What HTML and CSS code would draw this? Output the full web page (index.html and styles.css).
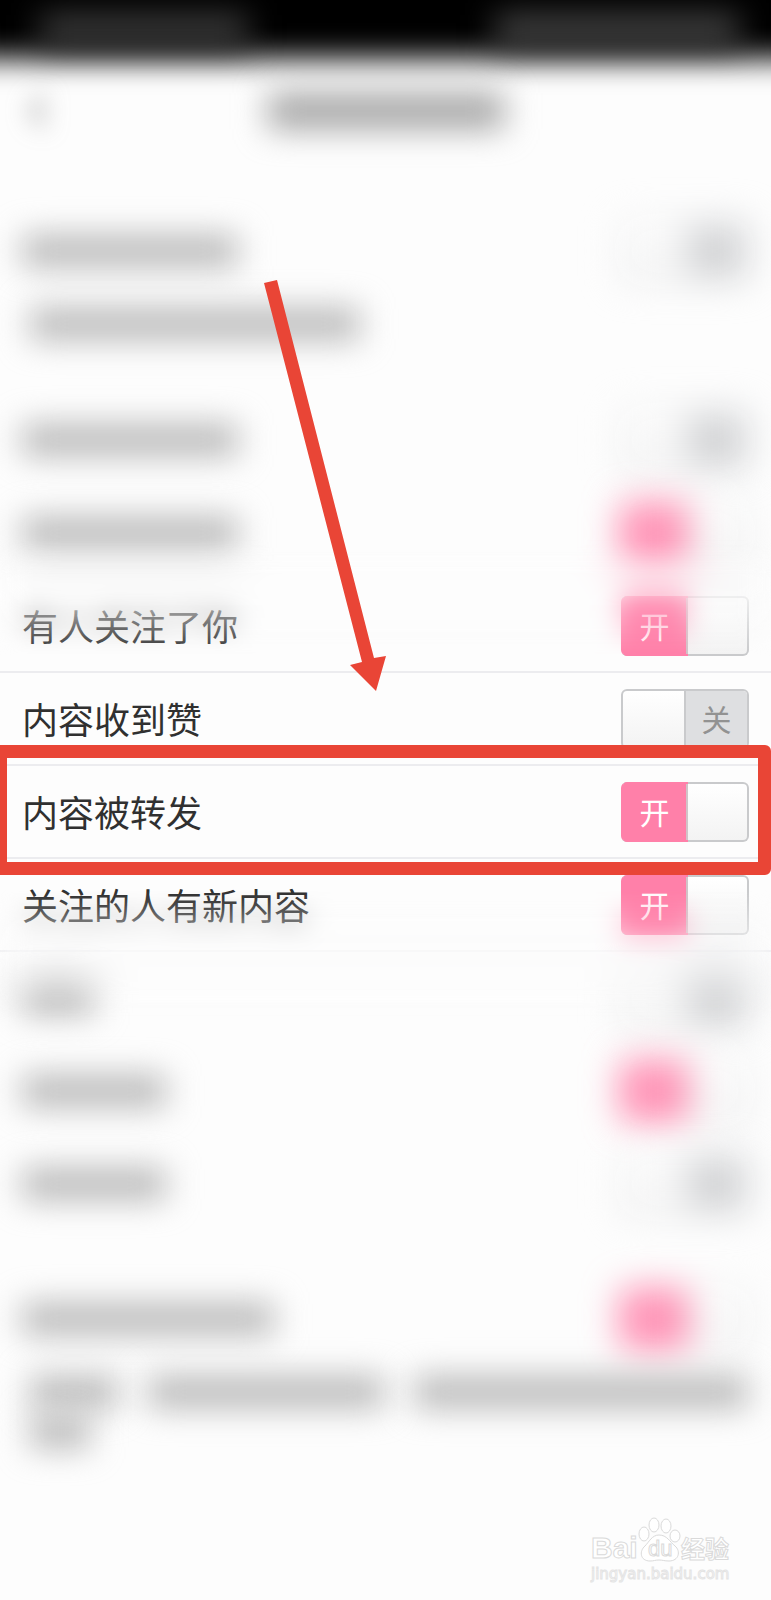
FILE: index.html
```html
<!DOCTYPE html>
<html lang="zh-CN">
<head>
<meta charset="utf-8">
<meta name="viewport" content="width=device-width, initial-scale=1">
<title>有人关注了你</title>
<link rel="stylesheet" href="styles.css">
</head>
<body>
<main class="screen">
  <div class="status"><span class="bar status-left"></span><span class="bar status-right"></span></div>
  <header class="header">
    <svg class="back" viewBox="0 0 20 36" aria-hidden="true"><path d="M17 3 4 18l13 15" fill="none" stroke="#777" stroke-width="4"/></svg>
    <span class="bar title"></span>
  </header>

  <section class="group">
    <div class="row plain"><span class="bar six"></span><label class="switch"><input type="checkbox" aria-label="关"><span class="on">开</span><span class="off">关</span></label></div>
    <div class="note short"><span class="bar desc"></span></div>
  </section>

  <section class="list">
    <div class="row plain"><span class="bar six"></span><label class="switch"><input type="checkbox" aria-label="关"><span class="on">开</span><span class="off">关</span></label></div>
    <div class="row plain"><span class="bar six"></span><label class="switch"><input type="checkbox" aria-label="开" checked><span class="on">开</span><span class="off">关</span></label></div>
    <div class="row"><label class="name" for="follow">有人关注了你</label><label class="switch"><input type="checkbox" id="follow" checked><span class="on">开</span><span class="off">关</span></label></div>
    <div class="row"><label class="name" for="like">内容收到赞</label><label class="switch"><input type="checkbox" id="like"><span class="on">开</span><span class="off">关</span></label></div>
    <div class="row"><label class="name" for="forward">内容被转发</label><label class="switch"><input type="checkbox" id="forward" checked><span class="on">开</span><span class="off">关</span></label></div>
    <div class="row"><label class="name" for="fresh">关注的人有新内容</label><label class="switch"><input type="checkbox" id="fresh" checked><span class="on">开</span><span class="off">关</span></label></div>
    <div class="row plain"><span class="bar two"></span><label class="switch"><input type="checkbox" aria-label="关"><span class="on">开</span><span class="off">关</span></label></div>
    <div class="row plain"><span class="bar four"></span><label class="switch"><input type="checkbox" aria-label="开" checked><span class="on">开</span><span class="off">关</span></label></div>
    <div class="row plain"><span class="bar four"></span><label class="switch"><input type="checkbox" aria-label="关"><span class="on">开</span><span class="off">关</span></label></div>
  </section>

  <section class="group">
    <div class="row plain"><span class="bar seven"></span><label class="switch"><input type="checkbox" aria-label="开" checked><span class="on">开</span><span class="off">关</span></label></div>
    <div class="note">
      <span class="bar part-a"></span><span class="bar part-b"></span><span class="bar part-c"></span><span class="bar part-d"></span>
    </div>
  </section>

  <div class="haze haze-top"></div>
  <div class="haze haze-bottom"></div>
  <div class="frame"></div>
  <svg class="arrow" viewBox="0 0 124 412" aria-hidden="true"><path d="M1 3 14 0 111 378l12-2-10 35-26-26 12-3z" fill="#e94536"/></svg>

  <svg class="mark" viewBox="0 0 144 72" role="img" aria-label="Baidu">
    <g class="outline">
      <text x="4" y="42" class="mark-big">Bai</text>
      <ellipse cx="57" cy="18" rx="5" ry="7"/>
      <ellipse cx="67" cy="9" rx="5" ry="7"/>
      <ellipse cx="79" cy="10" rx="5" ry="7"/>
      <ellipse cx="88" cy="20" rx="5" ry="6"/>
      <path d="M72 19c-7 0-10 7-14 11-6 5-5 15 5 15 4 0 5-1 9-1s5 1 10 1c10 0 12-10 6-15-5-4-8-11-16-11z"/>
      <text x="61" y="40" class="mark-du">du</text>
      <text x="94" y="42" class="mark-cn">经验</text>
      <text x="4" y="63" class="mark-url">jingyan.baidu.com</text>
    </g>
  </svg>
</main>
</body>
</html>
```
FILE: styles.css
```css
* { box-sizing: border-box; }

body {
  margin: 0;
  background: #fdfdfd;
  color: #303030;
  font-family: "Noto Sans CJK SC", sans-serif;
}

.screen {
  position: relative;
  min-height: 1600px;
  overflow: hidden;
  background: #fdfdfd;
}

.status {
  position: relative;
  display: flex;
  justify-content: space-between;
  align-items: center;
  height: 59px;
  padding: 0 32px 0 40px;
}

.status::before {
  content: "";
  position: absolute;
  inset: -60px -60px 0;
  background: #000;
  filter: blur(15px);
}

.header {
  position: relative;
  display: flex;
  align-items: center;
  justify-content: center;
  height: 104px;
}

.back {
  position: absolute;
  left: 28px;
  width: 20px;
  height: 36px;
  filter: blur(12px);
}

.bar {
  position: relative;
  display: block;
  flex: none;
  height: 32px;
  background: #b8b8b8;
  filter: blur(16px);
}

.status-left { width: 208px; background: #3c3c3c; }
.status-right { width: 244px; background: #444; }
.title { width: 236px; height: 36px; background: #a4a4a4; }
.two { width: 72px; }
.four { width: 144px; }
.six { width: 216px; }
.seven { width: 252px; }
.desc { width: 330px; }
.part-a { width: 88px; }
.part-b { width: 236px; }
.part-c { width: 334px; }
.part-d { width: 60px; }

.group { padding-top: 42px; }

.row {
  display: flex;
  align-items: center;
  justify-content: space-between;
  height: 93px;
  padding: 0 22px;
  border-bottom: 2px solid #ececef;
  font-size: 36px;
  line-height: 48px;
}

.plain { border-color: transparent; }
.plain .switch { filter: blur(18px); }

.name { padding-bottom: 2px; }

.note {
  display: flex;
  flex-wrap: wrap;
  gap: 8px 30px;
  padding: 10px 20px 0 30px;
}

.short { height: 96px; }

.switch {
  position: relative;
  display: grid;
  grid-template-columns: 61px 1fr;
  width: 128px;
  height: 60px;
  border: 2px solid #c9cacc;
  border-radius: 6px;
  background: linear-gradient(#fff, #f3f3f3);
  font-size: 30px;
  line-height: 54px;
  text-align: center;
}

.switch input {
  position: absolute;
  inset: 0;
  margin: 0;
  opacity: 0;
}

.switch span { visibility: hidden; }

.switch .off {
  border-left: 2px solid #c9cacc;
  border-radius: 0 4px 4px 0;
  background: #dedfe1;
  color: #929292;
}

.switch:has(:not(:checked)) .off { visibility: visible; }

.switch:has(:checked) {
  grid-template-columns: 65px 1fr;
  border-left-color: #ff80a9;
}

.switch:has(:checked) .off { visibility: hidden; }

.switch:has(:checked) .on {
  visibility: visible;
  border-right: 2px solid #d0c4c8;
  border-radius: 4px 0 0 4px;
  background: #ff80a9;
  box-shadow: 0 -2px #ff80a9, 0 2px #ff80a9;
  color: #fff;
}

.haze {
  position: absolute;
  left: 0;
  right: 0;
  backdrop-filter: blur(14px);
  pointer-events: none;
}

.haze-top {
  top: 540px;
  height: 120px;
  mask-image: linear-gradient(transparent, #000 40px, transparent 116px);
}

.haze-bottom {
  top: 890px;
  height: 130px;
  mask-image: linear-gradient(transparent, #000 80px, transparent);
}

.frame {
  position: absolute;
  top: 745px;
  left: -6px;
  right: 0;
  height: 130px;
  border: 13px solid #e94536;
  border-radius: 6px;
  pointer-events: none;
}

.arrow {
  position: absolute;
  top: 280px;
  left: 263px;
  width: 124px;
  height: 412px;
  pointer-events: none;
}

.mark {
  position: absolute;
  right: 40px;
  bottom: 12px;
  width: 144px;
  height: 72px;
}

.outline {
  fill: #fff;
  stroke: #dadada;
  stroke-width: 1px;
  font-family: "Liberation Sans", "Noto Sans CJK SC", sans-serif;
}

.mark-big { font-size: 30px; font-weight: 700; }
.mark-du { font-size: 22px; }
.mark-cn { font-size: 24px; font-weight: 700; }
.mark-url { font-family: "DejaVu Sans", sans-serif; font-size: 15px; stroke: #e4e4e4; }
```
